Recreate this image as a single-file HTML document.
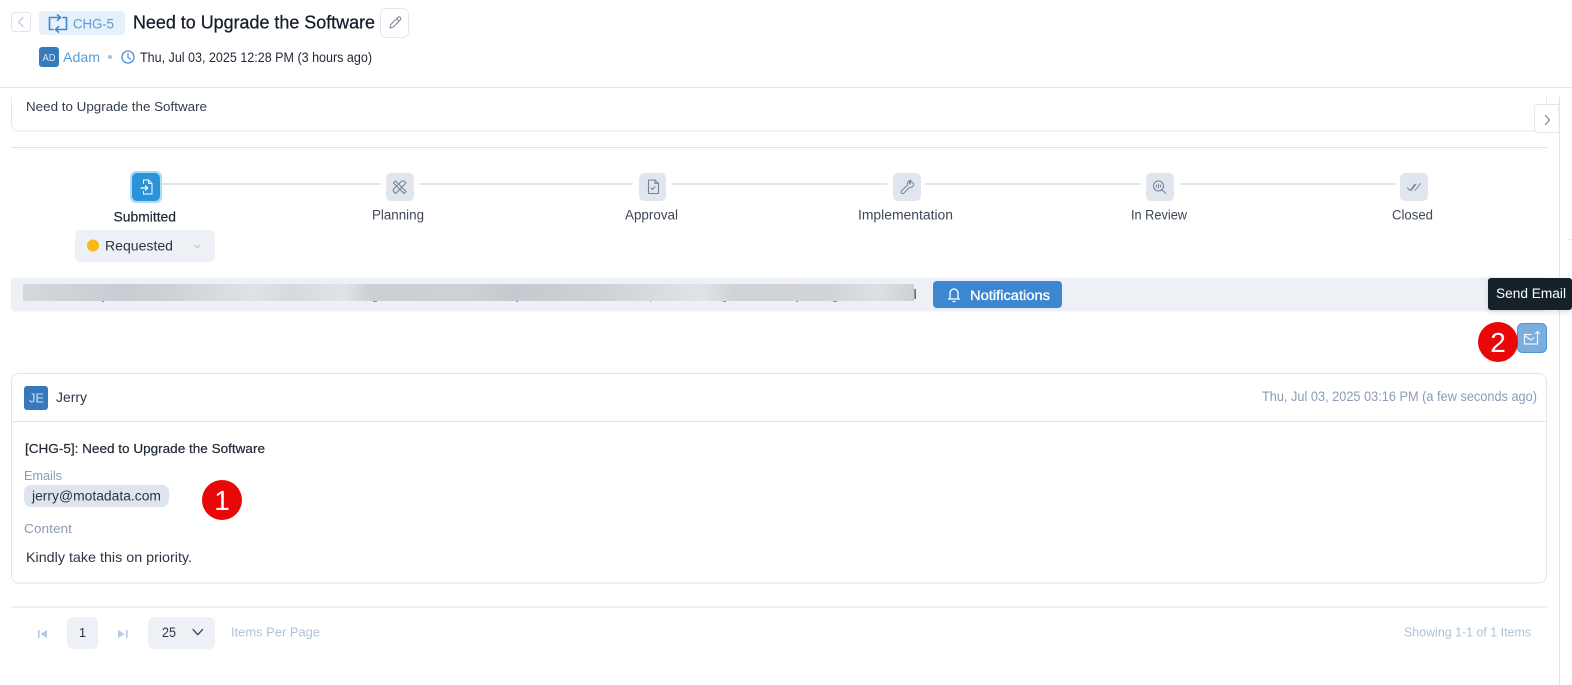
<!DOCTYPE html>
<html><head><meta charset="utf-8"><style>
html,body{margin:0;padding:0;background:#fff;width:1572px;height:685px;overflow:hidden}
svg{display:block}
text{font-family:"Liberation Sans",sans-serif;font-size:13px;fill:#2b3544;white-space:pre}
.i{fill:none;stroke-linecap:round;stroke-linejoin:round}
</style></head><body>
<svg width="1572" height="685" viewBox="0 0 1572 685" xmlns="http://www.w3.org/2000/svg">
<defs>
<linearGradient id="bl" x1="0" x2="1" y1="0" y2="0">
<stop offset="0" stop-color="#d5d8dd"/><stop offset=".05" stop-color="#cfd2d7"/><stop offset=".11" stop-color="#c9ccd2"/><stop offset=".16" stop-color="#cdd0d4"/><stop offset=".26" stop-color="#dfe2e7"/><stop offset=".3" stop-color="#d6d9dd"/><stop offset=".36" stop-color="#e0e3e8"/><stop offset=".39" stop-color="#ccd0d4"/><stop offset=".5" stop-color="#cdd1d5"/><stop offset=".55" stop-color="#c6c9cf"/><stop offset=".65" stop-color="#ced1d5"/><stop offset=".76" stop-color="#e0e3e7"/><stop offset=".8" stop-color="#cfd2d6"/><stop offset=".9" stop-color="#d0d3d7"/><stop offset=".96" stop-color="#dcdfe3"/><stop offset="1" stop-color="#cdd0d4"/>
</linearGradient>
<filter id="sh" x="-20%" y="-20%" width="140%" height="150%"><feDropShadow dx="0" dy="2" stdDeviation="3" flood-color="#000" flood-opacity=".12"/></filter>
</defs>

<!-- header -->
<rect x="11.500" y="12.500" width="19" height="19" rx="3" fill="#fff" stroke="#dfe5ee"/>
<path class="i" d="M23 17.500l-4.500 4.500 4.500 4.500" stroke="#b4c3d6" stroke-width="1.100"/>
<rect x="39" y="11" width="86" height="24" rx="4" fill="#e6f0fa"/>
<g class="i" stroke="#3d87d0" stroke-width="1.600" stroke-linecap="butt">
<path d="M53 29.500H49.500V17.500H60.500"/><path d="M57.500 14.800l3 2.700-3 2.700"/>
<path d="M63 17.500h3.500V29.500H55.500"/><path d="M58.500 26.800l-3 2.700 3 2.700"/>
</g>
<text x="73" y="28.500" textLength="41" lengthAdjust="spacingAndGlyphs" style="font-size:14px;fill:#5b9bd8">CHG-5</text>
<text x="133" y="28.500" textLength="242" lengthAdjust="spacingAndGlyphs" style="font-size:18px;fill:#111b2b;stroke:#111b2b;stroke-width:.25">Need to Upgrade the Software</text>
<rect x="380.500" y="8.500" width="28" height="29" rx="6" fill="#fff" stroke="#e3e8ef"/>
<path class="i" d="M390 28l.8-3.500 7-7a1.500 1.500 0 0 1 2.500 2.500l-7 7zM396.500 18.500l2.500 2.500" stroke="#7d8a9c" stroke-width="1.100"/>

<rect x="39" y="47" width="20" height="20" rx="3" fill="#3679bd"/>
<text x="42.500" y="61" textLength="13" lengthAdjust="spacingAndGlyphs" style="font-size:10.500px;fill:#d9e8f7">AD</text>
<text x="63" y="62" textLength="37" lengthAdjust="spacingAndGlyphs" style="font-size:14px;fill:#5b9bd8">Adam</text>
<circle cx="110" cy="57" r="2" fill="#a9c1db"/>
<circle cx="128" cy="57" r="6" fill="none" stroke="#4a90d6" stroke-width="1.300"/>
<path class="i" d="M128 53.500V57.500l2.500 1.500" stroke="#4a90d6" stroke-width="1.200"/>
<text x="140" y="62" textLength="232" lengthAdjust="spacingAndGlyphs" style="font-size:13.500px;fill:#1f2937">Thu, Jul 03, 2025 12:28 PM (3 hours ago)</text>
<rect x="0" y="87" width="1572" height="1" fill="#e0e3ec"/>

<!-- collapsed card -->
<path d="M11.500 97v27a7 7 0 0 0 7 7H1559" fill="none" stroke="#e3e7ee"/>
<rect x="1546" y="97" width="1" height="8" fill="#e3e7ee"/>
<rect x="1559" y="97" width="1" height="588" fill="#e0e4ee"/>
<rect x="1568" y="239" width="4" height="1" fill="#e3e7ee"/>
<text x="26" y="111" textLength="181" lengthAdjust="spacingAndGlyphs" style="font-size:13px;fill:#333d4b">Need to Upgrade the Software</text>
<path d="M1559 104.500h-21a3.500 3.500 0 0 0-3.500 3.500v21a3.500 3.500 0 0 0 3.500 3.500h21z" fill="#fff" stroke="#e3e7ee"/>
<path class="i" d="M1545.500 115.500l4 4.500-4 4.500" stroke="#76869b" stroke-width="1.200"/>
<rect x="11" y="147" width="1536" height="1" fill="#e0e3ec"/>

<!-- stepper -->
<g fill="#e0e5ee">
<rect x="162" y="183" width="219" height="2"/>
<rect x="419" y="183" width="214" height="2"/>
<rect x="671" y="183" width="216" height="2"/>
<rect x="925" y="183" width="216" height="2"/>
<rect x="1180" y="183" width="215" height="2"/>
</g>
<rect x="130" y="171" width="32" height="32" rx="6" fill="#a9dcf5"/>
<rect x="132" y="173" width="28" height="28" rx="5" fill="#2b93d9"/>
<g class="i" stroke="#fff" stroke-width="1">
<path d="M143.500 183.500v-3.500h5l3.500 3.500v10.500h-8.500v-2.500"/><path d="M148.500 180v3.500h3.500"/><path d="M141 188h6.500M145.500 186l2.200 2-2.200 2" stroke-width="1.300"/>
</g>
<g fill="#e0e5ee">
<rect x="386" y="173" width="28" height="28" rx="5"/>
<rect x="639" y="173" width="27" height="28" rx="5"/>
<rect x="893" y="173" width="28" height="28" rx="5"/>
<rect x="1146" y="173" width="28" height="28" rx="5"/>
<rect x="1400" y="173" width="28" height="28" rx="5"/>
</g>
<g class="i" stroke="#75839a" stroke-width="1.100">
<path d="M393.500 183l2-2 10.500 10.500-2 2zM404 181l2 2-10.500 10.500-2-2-.3-2 8.500-8.500z"/>
<path d="M648.500 180h6.500l3.500 3.500v10h-10zM655 180v3.500h3.500M651 188l1.500 1.500 2.500-2.700"/>
<path d="M911 181.500a3.500 3.500 0 0 1 2 5l-1.500 1-1.800-.3-6 6a1.500 1.500 0 0 1-2.300-2.200l6.200-6-.2-1.800a3.500 3.500 0 0 1 3.600-3l-2 2.300 1 1.600z" stroke-width=".95"/>
<circle cx="1158.500" cy="186" r="5"/><path d="M1162 190l4 3.500M1156.500 185v2M1158.500 184v4M1160.500 185v2" stroke-width="1"/>
<path d="M1407.500 188l2.500 2.500 4.500-6M1411.500 190.500l4.500-6.500M1415 190.500l5.500-7" stroke-width=".9"/>
</g>
<text x="113.500" y="221.500" textLength="62.500" lengthAdjust="spacingAndGlyphs" style="font-size:13.500px;fill:#1f2937;stroke:#1f2937;stroke-width:.2">Submitted</text>
<text x="372" y="219.500" textLength="52" lengthAdjust="spacingAndGlyphs" style="font-size:13.500px;fill:#3d4756">Planning</text>
<text x="625" y="219.500" textLength="53" lengthAdjust="spacingAndGlyphs" style="font-size:13.500px;fill:#3d4756">Approval</text>
<text x="858" y="219.500" textLength="95" lengthAdjust="spacingAndGlyphs" style="font-size:13.500px;fill:#3d4756">Implementation</text>
<text x="1131" y="219.500" textLength="56" lengthAdjust="spacingAndGlyphs" style="font-size:13.500px;fill:#3d4756">In Review</text>
<text x="1392" y="219.500" textLength="41" lengthAdjust="spacingAndGlyphs" style="font-size:13.500px;fill:#3d4756">Closed</text>

<rect x="75" y="230" width="140" height="32" rx="6" fill="#edf0f5"/>
<circle cx="93" cy="245.500" r="6" fill="#f8b912"/>
<text x="105" y="250.500" textLength="68" lengthAdjust="spacingAndGlyphs" style="font-size:14px;fill:#2b3544">Requested</text>
<path class="i" d="M194.500 245l2.700 2.700 2.700-2.700" stroke="#b6c0ce" stroke-width="1"/>

<!-- notification bar -->
<rect x="11" y="277.500" width="1535" height="34" rx="3" fill="#edf0f5"/>
<rect x="23" y="284" width="891" height="17" fill="url(#bl)"/>
<rect x="914.500" y="289" width="1.200" height="10" fill="#333"/>
<g fill="#8a8f98">
<rect x="102" y="301" width="2" height="1"/><rect x="373" y="301" width="4" height="1"/><rect x="516" y="301" width="2" height="1"/><rect x="650" y="301" width="1" height="1"/><rect x="723" y="301" width="3" height="1"/><rect x="796" y="301" width="2" height="1"/><rect x="833" y="301" width="4" height="1"/>
</g>
<rect x="933" y="281" width="129" height="27" rx="4" fill="#3d87d0"/>
<g class="i" stroke="#fff" stroke-width="1.300">
<path d="M950 299v-6a4 4 0 0 1 8 0v6zM948.500 299h11M953 301.500h2"/>
</g>
<text x="970" y="300" textLength="80" lengthAdjust="spacingAndGlyphs" style="font-size:13.500px;fill:#fff;stroke:#fff;stroke-width:.3">Notifications</text>

<!-- send email -->
<rect x="1517.500" y="323.500" width="29" height="29" rx="5" fill="#7aaedd" stroke="#4b92d8"/>
<g class="i" stroke="#eef5fc" stroke-width="1.200">
<path d="M1531 334.500h-6.500v9.500h13v-6"/><path d="M1524.500 335.500l6.500 4.500 3-2.200"/><path d="M1537.500 337v-5.500M1535.500 333.500l2-2 2 2"/>
</g>
<rect x="1488" y="278" width="84" height="32" rx="3" fill="#16202c" filter="url(#sh)"/>
<text x="1496" y="298" textLength="70" lengthAdjust="spacingAndGlyphs" style="font-size:13.500px;fill:#fff">Send Email</text>
<circle cx="1498" cy="342" r="20" fill="#ea0707"/>
<text x="1498" y="352" text-anchor="middle" style="font-size:28px;fill:#fff">2</text>

<!-- email card -->
<rect x="11.500" y="373.500" width="1535" height="209.500" rx="7" fill="#fff" stroke="#e0e5ec"/>
<rect x="12" y="421" width="1534" height="1" fill="#e0e5ec"/>
<rect x="24" y="386" width="24" height="24" rx="3" fill="#3679bd"/>
<text x="29" y="402.500" textLength="15" lengthAdjust="spacingAndGlyphs" style="font-size:13px;fill:#cfe2f5">JE</text>
<text x="56" y="402" textLength="31" lengthAdjust="spacingAndGlyphs" style="font-size:14px;fill:#2b3544">Jerry</text>
<text x="1262" y="401" textLength="275" lengthAdjust="spacingAndGlyphs" style="font-size:13.500px;fill:#8a9bb3">Thu, Jul 03, 2025 03:16 PM (a few seconds ago)</text>
<text x="25" y="453" textLength="240" lengthAdjust="spacingAndGlyphs" style="font-size:13px;fill:#1f2937;stroke:#1f2937;stroke-width:.2">[CHG-5]: Need to Upgrade the Software</text>
<text x="24" y="480" textLength="38" lengthAdjust="spacingAndGlyphs" style="font-size:13px;fill:#8a9bb3">Emails</text>
<rect x="24" y="485" width="145" height="22" rx="7" fill="#dfe5ee"/>
<text x="32" y="500.500" textLength="129" lengthAdjust="spacingAndGlyphs" style="font-size:13.500px;fill:#2b3544">jerry@motadata.com</text>
<circle cx="222" cy="500" r="20" fill="#ea0707"/>
<text x="222" y="510" text-anchor="middle" style="font-size:28px;fill:#fff">1</text>
<text x="24" y="533" textLength="48" lengthAdjust="spacingAndGlyphs" style="font-size:13px;fill:#8a9bb3">Content</text>
<text x="26" y="562" textLength="166" lengthAdjust="spacingAndGlyphs" style="font-size:14px;fill:#2b3544">Kindly take this on priority.</text>

<!-- footer -->
<rect x="11" y="606.500" width="1536" height="1" fill="#e0e3ec"/>
<path d="M38 630h1.600v8H38zM47 630v8l-6.500-4z" fill="#b4c8de"/>
<rect x="67" y="617" width="31" height="32" rx="6" fill="#edf0f5"/>
<text x="82.500" y="637" text-anchor="middle" style="font-size:13px;fill:#2b3544">1</text>
<path d="M126 630h1.600v8H126zM118 630v8l6.500-4z" fill="#b4c8de"/>
<rect x="148" y="617" width="67" height="32" rx="6" fill="#edf0f5"/>
<text x="162" y="637" textLength="14" lengthAdjust="spacingAndGlyphs" style="font-size:13.500px;fill:#2b3544">25</text>
<path class="i" d="M193 629.500l4.800 5.200 4.800-5.200" stroke="#2b3544" stroke-width="1.200"/>
<text x="231" y="636.500" textLength="89" lengthAdjust="spacingAndGlyphs" style="font-size:13px;fill:#b0c2d8">Items Per Page</text>
<text x="1404" y="636.500" textLength="127" lengthAdjust="spacingAndGlyphs" style="font-size:13px;fill:#b0c2d8">Showing 1-1 of 1 Items</text>
</svg>
</body></html>
